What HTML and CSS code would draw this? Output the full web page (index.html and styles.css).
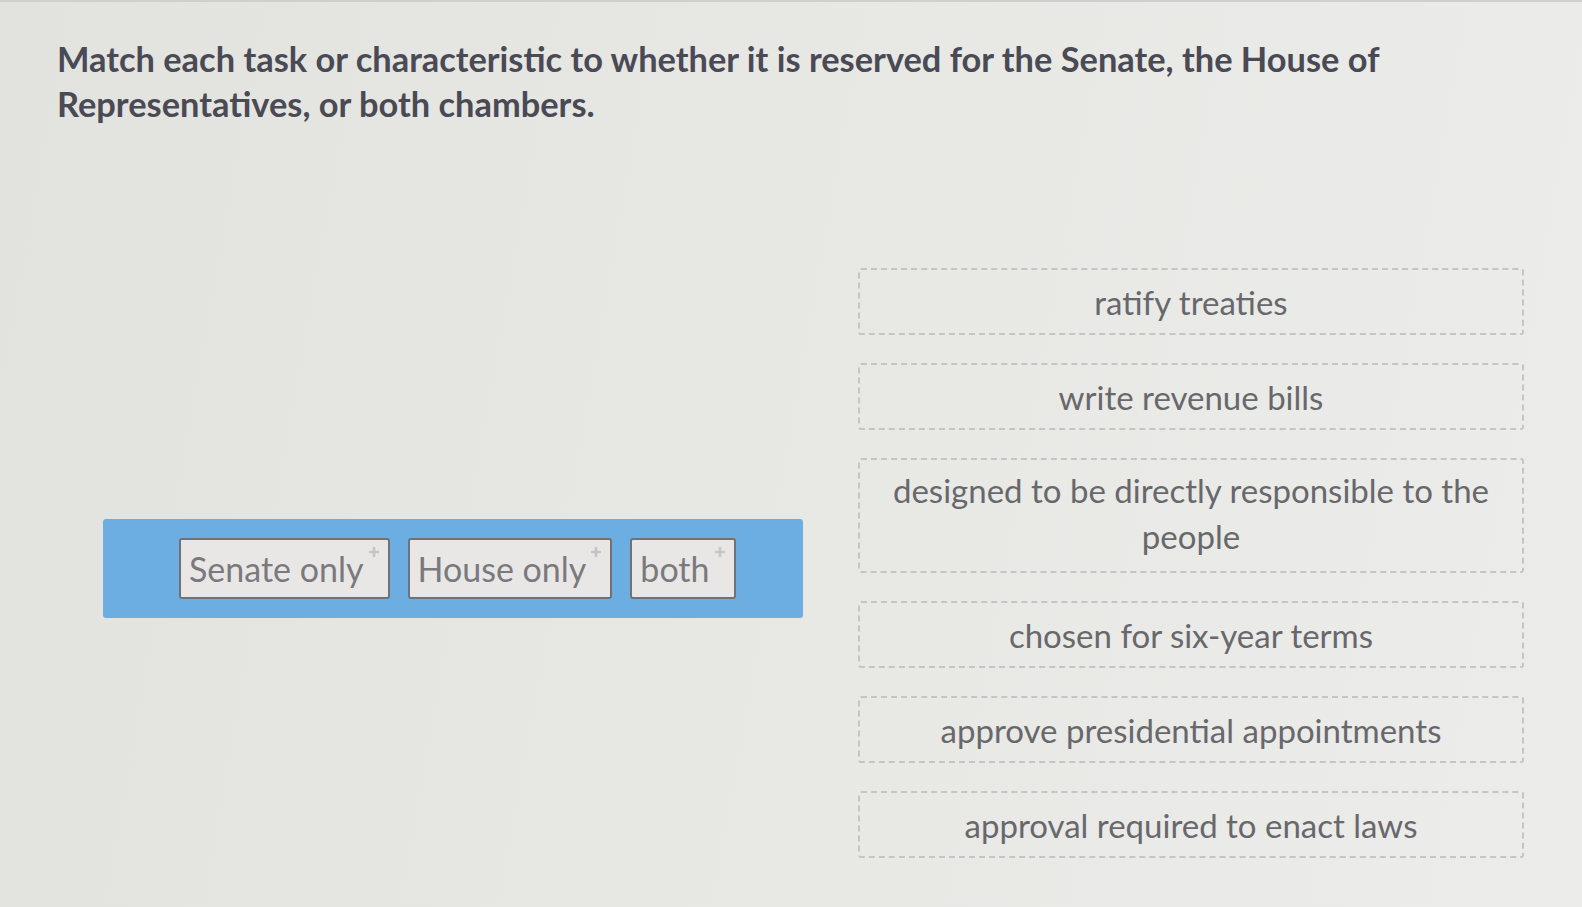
FILE: index.html
```html
<!DOCTYPE html>
<html lang="en">

<head>
    <meta charset="UTF-8">
    <title>Match the chambers</title>
    <link rel="stylesheet" href="styles.css">
</head>

<body>
    <div class="page">
        <h1 class="prompt">Match each task or characteristic to whether it is reserved for the Senate, the House of Representatives, or both chambers.</h1>

        <div class="board">
            <div class="bank">
                <div class="chip">Senate only<span class="plus"><svg viewBox="0 0 12 12" width="12" height="12"><path d="M6 1v10M1 6h10" stroke="#c4c5c9" stroke-width="2.6"/></svg></span></div>
                <div class="chip">House only<span class="plus"><svg viewBox="0 0 12 12" width="12" height="12"><path d="M6 1v10M1 6h10" stroke="#c4c5c9" stroke-width="2.6"/></svg></span></div>
                <div class="chip">both<span class="plus"><svg viewBox="0 0 12 12" width="12" height="12"><path d="M6 1v10M1 6h10" stroke="#c4c5c9" stroke-width="2.6"/></svg></span></div>
            </div>

            <div class="targets">
                <div class="slot">ratify treaties</div>
                <div class="slot">write revenue bills</div>
                <div class="slot tall">designed to be directly responsible to the people</div>
                <div class="slot">chosen for six-year terms</div>
                <div class="slot">approve presidential appointments</div>
                <div class="slot">approval required to enact laws</div>
            </div>
        </div>
    </div>
</body>

</html>
```

FILE: styles.css
```css
body {
    margin: 0;
    font-family: Lato, "Open Sans", sans-serif;
    background: linear-gradient(100deg, #e2e2df 0%, #e7e7e4 45%, #ececea 100%);
    height: 907px;
    overflow: hidden;
}

.page {
    border-top: 2px solid #cfcfcd;
    padding: 34px 0 0 57px;
}

/* question text */
.prompt {
    margin: 0;
    width: 1420px;
    font-size: 34.4px;
    font-weight: bold;
    line-height: 45px;
    color: #4a4a55;
}

.board {
    display: flex;
    align-items: center;
    margin-top: 142px;
    margin-left: 46px;
    gap: 55px;
}

/* blue answer bank */
.bank {
    flex: none;
    width: 700px;
    height: 99px;
    margin-top: 10px;
    background-color: #6caee2;
    border-radius: 3px;
    display: flex;
    align-items: center;
    gap: 18px;
    padding-left: 76px;
    box-sizing: border-box;
}

.chip {
    position: relative;
    height: 61px;
    box-sizing: border-box;
    display: flex;
    align-items: center;
    padding: 0 24px 0 8px;
    background-color: #e9e7e5;
    border: 2px solid #6f7378;
    border-radius: 3px;
    font-size: 34px;
    color: #7a7a7e;
}

.plus {
    position: absolute;
    top: 5px;
    right: 8px;
    line-height: 0;
}

/* drop targets */
.targets {
    flex: none;
    display: flex;
    flex-direction: column;
    gap: 28px;
    width: 666px;
}

.slot {
    min-height: 67px;
    box-sizing: border-box;
    border: 2px dashed #c5c5c3;
    border-radius: 3px;
    display: flex;
    align-items: center;
    justify-content: center;
    text-align: center;
    font-size: 33px;
    line-height: 46px;
    color: #68686c;
    padding: 0 20px;
}

.slot.tall {
    min-height: 115px;
    padding: 6px 20px 12px;
}
```
